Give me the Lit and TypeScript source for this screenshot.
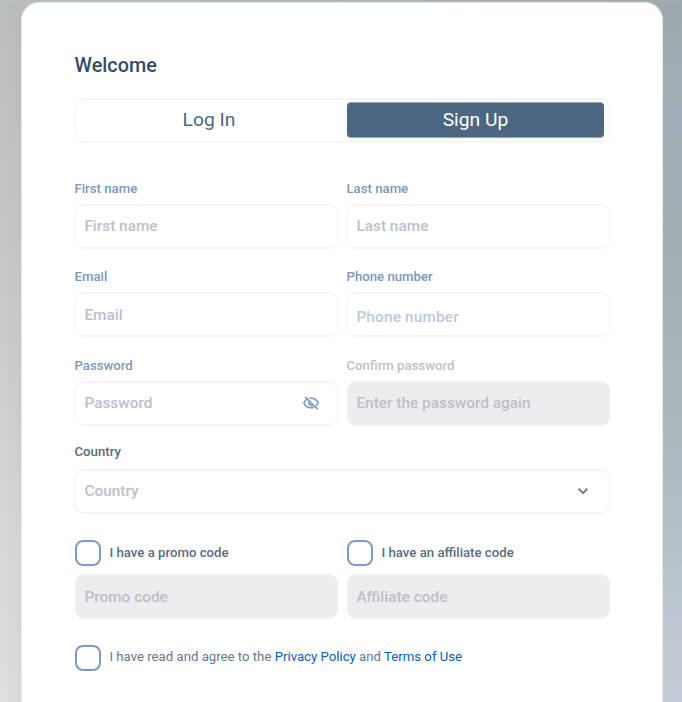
import { LitElement, html, css, nothing } from "lit";
import { customElement, property } from "lit/decorators.js";

@customElement("form-field")
class FormField extends LitElement {
  @property() label = "";
  @property() placeholder = "";
  @property() icon = "";
  @property() tone = "";
  @property({ type: Boolean }) disabled = false;

  static styles = css`
    :host { display: block; min-width: 0; font-family: Roboto, sans-serif; }
    .label {
      display: block; height: 15px; line-height: 15px; margin: 0 0 8px -0.5px;
      font-size: 13.2px; font-weight: 500; color: #7799bd;
    }
    .label.dark { color: #566b82; margin-bottom: 10px; }
    .label.muted { color: #c0c1c2; }
    .box {
      display: flex; align-items: center; justify-content: space-between;
      box-sizing: border-box; height: 45px; padding: 0 18px 0 8.4px;
      border: solid #f2f5f9; border-width: 2px 1px; border-radius: 9px; background: #fff;
    }
    .box.disabled { background: #ededef; border-color: #f1f1f3; }
    .value { font-size: 15.4px; line-height: 18px; font-weight: 500; color: #bbc0cb; margin-top: -2px; }
    .value.low { margin-top: 1px; }
    .value.phone { color: #bccbdd; margin-top: 5px; letter-spacing: 0.15px; }
    svg { display: block; fill: none; flex: none; }
    .eye { stroke: #7396bc; stroke-width: 1.5; margin-top: -1px; }
    .pupil { fill: #7396bc; stroke: none; }
    .chevron { stroke: #5d708c; stroke-width: 1.7; margin: -1px 2px 0 0; }
  `;

  private renderIcon() {
    if (this.icon === "eye")
      return html`<svg class="eye" width="16" height="16" viewBox="0 0 16 16">
        <path d="M5.2 3.6C3.1 4.4 1.7 6 .9 8c1.2 2.9 3.7 4.8 7.1 4.8 1 0 2-.2 2.8-.5M6.4 3.3C11 2.7 13.9 4.8 15.1 8c-.5 1.2-1.2 2.2-2.2 3M2.1 1.7l12.6 12.5" />
        <path class="pupil" d="M5.1 6.3 10 11.1C7.2 12 4.2 9.6 5.1 6.3Z" />
      </svg>`;
    if (this.icon === "chevron")
      return html`<svg class="chevron" width="12" height="8" viewBox="0 0 12 8"><path d="M1.6 1.6 6 6l4.4-4.4" /></svg>`;
    return nothing;
  }

  render() {
    return html`
      ${this.label ? html`<span class="label ${this.tone}">${this.label}</span>` : nothing}
      <div class="box ${this.disabled ? "disabled" : ""}">
        <span class="value ${this.tone}">${this.placeholder}</span>
        ${this.renderIcon()}
      </div>`;
  }
}

@customElement("check-option")
class CheckOption extends LitElement {
  @property({ type: Boolean }) regular = false;

  static styles = css`
    :host { display: flex; gap: 8.5px; height: 26px; font-family: Roboto, sans-serif; }
    .mark { box-sizing: border-box; width: 26px; height: 26px; border: 2px solid #7b9bc2; border-radius: 8px; flex: none; }
    .text { font-size: 13.2px; line-height: 26px; font-weight: 500; color: #596d83; white-space: nowrap; }
    .text.regular { font-weight: 400; line-height: 23px; color: #66788c; }
  `;

  render() {
    return html`<span class="mark"></span><span class="text ${this.regular ? "regular" : ""}"><slot></slot></span>`;
  }
}

@customElement("app-root")
class AppRoot extends LitElement {
  static styles = css`
    :host {
      display: block; box-sizing: border-box; height: 702px; padding: 2px 19px 0 21px; overflow: hidden;
      background:
        linear-gradient(to right, #bbbfbb 0, #b0b7b4 45%, #a0abb1 100%) 0 0 / 100% 3px no-repeat,
        linear-gradient(to right, transparent, rgba(150, 160, 165, 0.12)) 0 0 / 21px 100% no-repeat,
        linear-gradient(#bbbfbb 0, #c5c6c4 200px, #cfd1d1 400px, #d8dada 540px, #dfe1e1 702px) 0 0 / 50% 100% no-repeat,
        linear-gradient(#9faaaf 0, #9faeb7 120px, #a2adb3 230px, #a9b6bc 400px, #b3c0c8 540px, #bec7d1 610px, #c5ccd7 702px) 100% 0 / 50% 100% no-repeat;
      font-family: Roboto, sans-serif;
    }
    .card {
      box-sizing: border-box; height: 720px; padding: 51px 52px 0 53px;
      border: 1px solid #e4e9ed; border-radius: 18px 18px 0 0; background: #fff;
    }
    .title { margin: 0 0 0 -0.4px; height: 24px; line-height: 24px; font-size: 19.8px; font-weight: 500; color: #344c66; }
    .tabs {
      display: grid; grid-template-columns: 1fr 257px; gap: 5px; margin-top: 20px;
      box-sizing: border-box; height: 45px; padding: 2px 5px 2px 0;
      border: solid #f5f5f1; border-width: 2px 1px; border-radius: 9px;
    }
    .tab { box-sizing: border-box; height: 36px; line-height: 36px; text-align: center; font-size: 19.25px; color: #4b6782; border-radius: 4px; }
    .tab.active { background: #4b6782; color: #fff; border: solid #93a4b4; border-width: 1px 0; line-height: 34px; }
    .pair { display: grid; grid-template-columns: 1fr 1fr; column-gap: 9px; }
    .names { margin-top: 38px; }
    .contact { margin-top: 20px; }
    .passwords { margin-top: 21px; }
    .country { margin-top: 18px; }
    .codes { margin-top: 26px; row-gap: 8px; }
    .terms { margin-top: 26px; }
    .link { color: #0062b8; text-decoration: none; }
  `;

  render() {
    return html`
      <main class="card">
        <h1 class="title">Welcome</h1>
        <nav class="tabs"><div class="tab">Log In</div><div class="tab active">Sign Up</div></nav>
        <section class="pair names">
          <form-field label="First name" placeholder="First name"></form-field>
          <form-field label="Last name" placeholder="Last name"></form-field>
        </section>
        <section class="pair contact">
          <form-field label="Email" placeholder="Email" tone="low"></form-field>
          <form-field label="Phone number" placeholder="Phone number" tone="phone"></form-field>
        </section>
        <section class="pair passwords">
          <form-field label="Password" placeholder="Password" icon="eye"></form-field>
          <form-field label="Confirm password" placeholder="Enter the password again" tone="muted" disabled></form-field>
        </section>
        <form-field class="country" label="Country" placeholder="Country" tone="dark" icon="chevron"></form-field>
        <section class="pair codes">
          <check-option>I have a promo code</check-option>
          <check-option>I have an affiliate code</check-option>
          <form-field placeholder="Promo code" tone="low" disabled></form-field>
          <form-field placeholder="Affiliate code" tone="low" disabled></form-field>
        </section>
        <check-option class="terms" regular>I have read and agree to the <a class="link">Privacy Policy</a> and <a class="link">Terms of Use</a></check-option>
      </main>`;
  }
}
